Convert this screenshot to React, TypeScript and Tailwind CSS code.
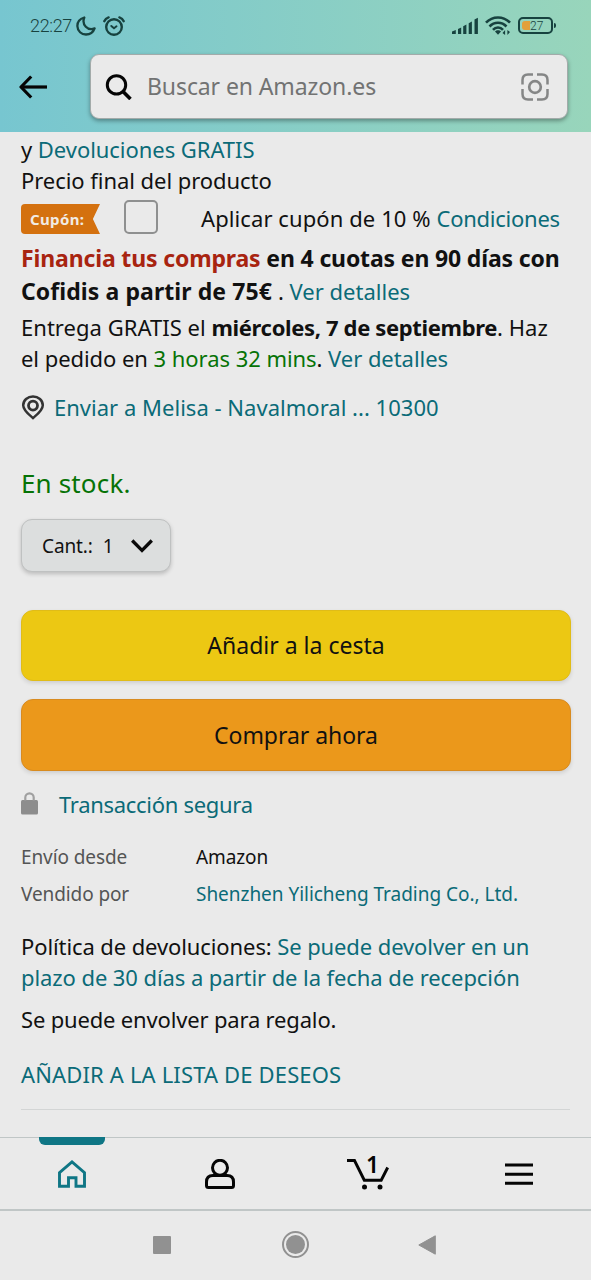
import type { ReactNode } from 'react'

// ── Status bar icons ───────────────────────────────────────────────────────────

function MoonIcon() {
  return (
    <svg className="ml-1 h-5 w-5" viewBox="0 0 20 20" fill="none" stroke="currentColor" strokeWidth="2.300" strokeLinejoin="round" aria-hidden="true">
      <path d="M8.300 1.500C3.900 2.800 1.200 6.100 1.400 10.300C1.600 15.300 5.400 18.500 10 18.500C14 18.500 17.300 16.100 18.600 12.400C15.500 13.700 12 13 9.800 10.700C7.400 8.100 7 4.600 8.300 1.500Z" />
    </svg>
  )
}

function AlarmIcon() {
  return (
    <svg className="ml-[7px] h-5 w-[22px]" viewBox="0 0 22 20" fill="none" stroke="currentColor" strokeWidth="2.400" strokeLinecap="round" aria-hidden="true">
      <circle cx="11" cy="11" r="7.800" />
      <path d="M1.300 5.200C2 3.500 3.600 2 5.600 1.400M20.700 5.200C20 3.500 18.400 2 16.400 1.400" />
      <path d="M8.300 10L11 12.200L13.500 10.300" strokeWidth="2" />
    </svg>
  )
}

function SignalIcon() {
  return (
    <svg className="h-[18px] w-7" viewBox="0 0 28 18" fill="currentColor" aria-hidden="true">
      <path d="M1 14.600l3.800-1.500V17H1zM7 12l3.200-1.600V17H7zM12.200 9.200l3.200-1.600V17h-3.200zM17.700 6.200l3.200-1.700V17h-3.200zM23.500 2.500l3.400-1.800V17h-3.400z" />
    </svg>
  )
}

function WifiIcon() {
  return (
    <svg className="ml-1.5 h-[19px] w-[26px]" viewBox="0 0 26 19" fill="none" stroke="currentColor" strokeWidth="2.600" aria-hidden="true">
      <path d="M1 6.700C7.500-.3 18.500-.3 25 6.700M4.500 10.500C9.200 5.500 16.800 5.500 21.500 10.500M8 13.800C10.700 10.700 15.300 10.700 18 13.800" />
      <path d="M10 15.500C11.500 13.800 14.500 13.800 16 15.500L13 18.800Z" fill="currentColor" stroke="none" />
      <path d="M17.500 17l2.600-3v5zM25 16l-2.600 3v-5z" fill="currentColor" stroke="none" />
    </svg>
  )
}

function Battery() {
  return (
    <div className="ml-[7px] flex items-center">
      <div className="flex h-[17px] w-[35px] items-center rounded-[5px] border-2 border-[#17423f] pl-[2px]">
        <span className="h-[9px] w-[8px] rounded-l-[3px] bg-[#e2a03a]" />
        <span className="font-['Roboto',sans-serif] text-[12px] font-light leading-none">27</span>
      </div>
      <span className="ml-px h-[5px] w-[2px] rounded-r-sm bg-[#17423f]" />
    </div>
  )
}

// ── Content icons ──────────────────────────────────────────────────────────────

function BackIcon() {
  return (
    <svg className="h-6 w-7" viewBox="0 0 28 24" fill="none" stroke="#050505" strokeWidth="3.200" aria-hidden="true">
      <path d="M28 12H3" />
      <path d="M12.200 1.500L2 12L12.200 22.500" strokeLinejoin="round" />
    </svg>
  )
}

function SearchIcon() {
  return (
    <svg className="h-[26px] w-[27px]" viewBox="0 0 27 26" fill="none" stroke="#050505" strokeWidth="3" aria-hidden="true">
      <circle cx="11.500" cy="10.900" r="9.200" />
      <path d="M18 17.500L25.500 25" strokeWidth="3.600" />
    </svg>
  )
}

function LensIcon() {
  return (
    <svg className="h-7 w-7" viewBox="0 0 28 28" fill="none" stroke="#858686" strokeWidth="2.500" aria-hidden="true">
      <path d="M1.500 11.500V7Q1.500 1.500 7 1.500H12M16 1.500H21Q26.500 1.500 26.500 7V11.500M26.500 16V21Q26.500 26.500 21 26.500H16M12 26.500H7Q1.500 26.500 1.500 21V16" />
      <circle cx="14" cy="14" r="5.800" strokeWidth="2.700" />
    </svg>
  )
}

function PinIcon() {
  return (
    <svg className="h-[25px] w-6" viewBox="0 0 24 25" fill="none" stroke="#333" strokeWidth="2.500" aria-hidden="true">
      <path d="M12 23C8.500 20 2.200 15.500 2.200 10.200A9.800 8.800 0 0 1 21.800 10.200C21.800 15.500 15.500 20 12 23Z" />
      <circle cx="12" cy="10.600" r="4.500" strokeWidth="2.800" />
    </svg>
  )
}

function ChevronIcon() {
  return (
    <svg className="h-[14px] w-[22px]" viewBox="0 0 22 14" fill="none" stroke="#0a0a0a" strokeWidth="3.300" aria-hidden="true">
      <path d="M1.200 1.500L11 11.300L20.800 1.500" />
    </svg>
  )
}

function LockIcon() {
  return (
    <svg className="mb-0.5 h-[23px] w-[17px]" viewBox="0 0 17 23" fill="#8d8d8d" aria-hidden="true">
      <rect y="8" width="17" height="14.500" rx="1.500" />
      <path d="M4.300 8.500V5.500a4.200 4.200 0 0 1 8.400 0v3" fill="none" stroke="#a0a0a0" strokeWidth="2.200" />
    </svg>
  )
}

// ── Bottom tab icons ───────────────────────────────────────────────────────────

function HomeIcon() {
  return (
    <svg className="h-7 w-7" viewBox="0 0 28 28" fill="none" stroke="#0f7685" strokeWidth="2.900" aria-hidden="true">
      <path d="M1.500 26.200V12.600L14 1.900L26.500 12.600V26.200H18V17.800H10.500V26.200Z" />
    </svg>
  )
}

function PersonIcon() {
  return (
    <svg className="h-[30px] w-[30px]" viewBox="0 0 30 30" fill="none" stroke="#050505" strokeWidth="3" aria-hidden="true">
      <circle cx="15" cy="8.800" r="7.500" />
      <path d="M9.500 16.500H8Q1.500 16.500 1.500 23V26.500Q1.500 28.500 3.500 28.500H26.500Q28.500 28.500 28.500 26.500V23Q28.500 16.500 22 16.500H20.500Z" strokeLinejoin="round" />
    </svg>
  )
}

function CartIcon() {
  return (
    <div className="relative h-[34px] w-[42px]">
      <svg className="h-[34px] w-[42px]" viewBox="0 0 42 34" fill="none" stroke="#050505" strokeWidth="2.900" aria-hidden="true">
        <path d="M0 4.500H7.500L17.300 24.200H34.200L40.700 11.500" />
        <circle cx="17.500" cy="31" r="2.500" fill="#050505" stroke="none" />
        <circle cx="33" cy="31" r="2.500" fill="#050505" stroke="none" />
      </svg>
      <span className="absolute left-[19px] top-0 text-[23px] font-semibold leading-4 text-[#050505]">1</span>
    </div>
  )
}

function MenuIcon() {
  return (
    <svg className="h-[23px] w-7" viewBox="0 0 28 23" stroke="#050505" strokeWidth="3" aria-hidden="true">
      <path d="M0 2H28M0 11.200H28M0 20.300H28" />
    </svg>
  )
}

// ── Shared pieces ──────────────────────────────────────────────────────────────

function Link({ children }: { children: ReactNode }) {
  return <a className="text-[#0b6b78]">{children}</a>
}

function Header() {
  return (
    <header className="h-[132px] bg-linear-to-r from-[#77c6d0] to-[#98d5bb]">
      <div className="flex h-[51px] items-center pl-[30px] pr-[35px] text-[#17423f]">
        <span className="font-['Roboto',sans-serif] text-[18px] font-light tracking-[-0.35px]">22:27</span>
        <MoonIcon />
        <AlarmIcon />
        <div className="ml-auto flex items-center">
          <SignalIcon />
          <WifiIcon />
          <Battery />
        </div>
      </div>
      <div className="flex items-center pl-[19px] pt-[3px]">
        <BackIcon />
        <div className="ml-[43px] flex h-[65px] w-[478px] items-center rounded-[9px] border border-[#a3abaa] bg-[#eaeaea] pl-[14px] pr-[18px] shadow-[0_2px_4px_rgba(0,0,0,0.35)]">
          <SearchIcon />
          <span className="ml-[15px] text-[23px] tracking-[-0.1px] text-[#727373]">Buscar en Amazon.es</span>
          <span className="ml-auto"><LensIcon /></span>
        </div>
      </div>
    </header>
  )
}

function CouponRow() {
  return (
    <div className="flex h-[43px] items-center">
      <span className="mt-[3px] h-[30px] w-[79px] rounded-l-[4px] bg-[#d4710f] pl-[9px] text-[15px] font-bold leading-[30px] tracking-[0.35px] text-[#f1ebe4] [clip-path:polygon(0_0,100%_0,91%_50%,100%_100%,0_100%)]">
        Cupón:
      </span>
      <span className="-mt-0.5 ml-6 h-[34px] w-[34px] rounded-[5px] border-2 border-[#8f9090]" />
      <span className="ml-[43px] pt-px tracking-[0.09px]">
        Aplicar cupón de 10 % <span className="tracking-[-0.25px]"><Link>Condiciones</Link></span>
      </span>
    </div>
  )
}

// ── Page ───────────────────────────────────────────────────────────────────────

export default function App() {
  return (
    <div className="flex h-[1280px] w-[591px] flex-col overflow-hidden bg-[#eaeaea] font-['Noto_Sans','Open_Sans',sans-serif] text-[22px] text-[#111]">
      <Header />

      <main className="flex h-[1005px] flex-col whitespace-nowrap px-[21px] pt-[2px] leading-[31px]">
        <p className="tracking-[-0.05px]">y <Link>Devoluciones GRATIS</Link></p>
        <p className="tracking-[-0.05px]">Precio final del producto</p>
        <CouponRow />

        <div className="mt-[3px] font-bold leading-[33px]">
          <p className="text-[23px] tracking-[-0.15px]"><span className="text-[#a82410]">Financia tus compras</span> en 4 cuotas en 90 días con</p>
          <p>
            <span className="text-[23px] tracking-[0.08px]">Cofidis a partir de 75€ </span>
            <span className="font-normal">. <Link>Ver detalles</Link></span>
          </p>
        </div>

        <div className="mt-1">
          <p className="tracking-[0.03px]">Entrega GRATIS el <b className="tracking-[-0.35px]">miércoles, 7 de septiembre</b>. Haz</p>
          <p className="tracking-[-0.05px]">el pedido en <span className="text-[#067306]">3 horas 32 mins</span>. <Link>Ver detalles</Link></p>
        </div>

        <div className="mt-[18px] flex items-center">
          <PinIcon />
          <span className="ml-[9px] tracking-[0.02px]"><Link>Enviar a Melisa - Navalmoral ... 10300</Link></span>
        </div>

        <p className="mt-[44px] text-[26px] leading-8 tracking-[0.15px] text-[#067306]">En stock.</p>

        <button className="mt-5 flex h-[53px] w-[150px] shrink-0 items-center rounded-[11px] border border-[#bfc1c1] bg-[#dcdede] pl-5 text-[19px] shadow-[0_2px_4px_rgba(0,0,0,0.2)]">
          <span className="pt-0.5 tracking-[-0.1px]">Cant.:</span>
          <span className="ml-[10px] pt-0.5">1</span>
          <span className="ml-[17px]"><ChevronIcon /></span>
        </button>

        <button className="mt-[38px] h-[71px] w-[550px] shrink-0 rounded-[12px] border border-[#e0bc18] bg-[#ecc813] text-[23px] shadow-[0_2px_4px_rgba(0,0,0,0.12)]">
          Añadir a la cesta
        </button>
        <button className="mt-[18px] h-[72px] w-[550px] shrink-0 rounded-[12px] border border-[#d88b20] bg-[#eb981b] text-[23px] shadow-[0_2px_4px_rgba(0,0,0,0.12)]">
          <span className="tracking-[-0.05px]">Comprar ahora</span>
        </button>

        <div className="mt-[18px] flex items-center">
          <LockIcon />
          <span className="ml-[21px] tracking-[-0.3px]"><Link>Transacción segura</Link></span>
        </div>

        <dl className="mt-[19px] grid grid-cols-[175px_1fr] text-[19px] leading-[37px]">
          <dt className="tracking-[-0.1px] text-[#545555]">Envío desde</dt>
          <dd className="tracking-[-0.1px]">Amazon</dd>
          <dt className="tracking-[-0.1px] text-[#545555]">Vendido por</dt>
          <dd className="tracking-[-0.03px]"><Link>Shenzhen Yilicheng Trading Co., Ltd.</Link></dd>
        </dl>

        <p className="mt-[18px] tracking-[-0.1px]">Política de devoluciones: <Link>Se puede devolver en un</Link></p>
        <p className="tracking-[-0.08px]"><Link>plazo de 30 días a partir de la fecha de recepción</Link></p>
        <p className="mt-[11px] tracking-[-0.17px]">Se puede envolver para regalo.</p>
        <p className="mt-6 tracking-[0.15px]"><Link>AÑADIR A LA LISTA DE DESEOS</Link></p>
        <hr className="mt-[19px] border-[#d3d5d5]" />
      </main>

      {/* App tabs */}
      <nav className="flex h-[74px] border-b-2 border-t border-[#c0c6c6] *:shrink-0" aria-label="Amazon">
        <div className="relative flex w-[143px] justify-center pt-[22px]">
          <span className="absolute left-[39px] top-[-1px] h-2 w-[66px] rounded-b-[6px] bg-[#0f7685]" />
          <HomeIcon />
        </div>
        <div className="flex w-[154px] justify-center pt-[21px]"><PersonIcon /></div>
        <div className="flex w-[142px] justify-center pt-[18px]"><CartIcon /></div>
        <div className="flex w-[159px] justify-center pt-[25px]"><MenuIcon /></div>
      </nav>

      {/* System buttons */}
      <footer className="flex h-[67px] items-center pl-[153px]">
        <span className="h-[18px] w-[18px] rounded-[1px] bg-[#919191]" />
        <span className="ml-[111px] flex h-[27px] w-[27px] items-center justify-center rounded-full border-2 border-[#919191]">
          <span className="h-[19px] w-[19px] rounded-full bg-[#919191]" />
        </span>
        <svg className="ml-[109px] h-5 w-[18px]" viewBox="0 0 18 20" fill="#919191" stroke="#919191" strokeLinejoin="round" aria-hidden="true">
          <path d="M.8 10L17.300.8V19.200Z" />
        </svg>
      </footer>
    </div>
  )
}
